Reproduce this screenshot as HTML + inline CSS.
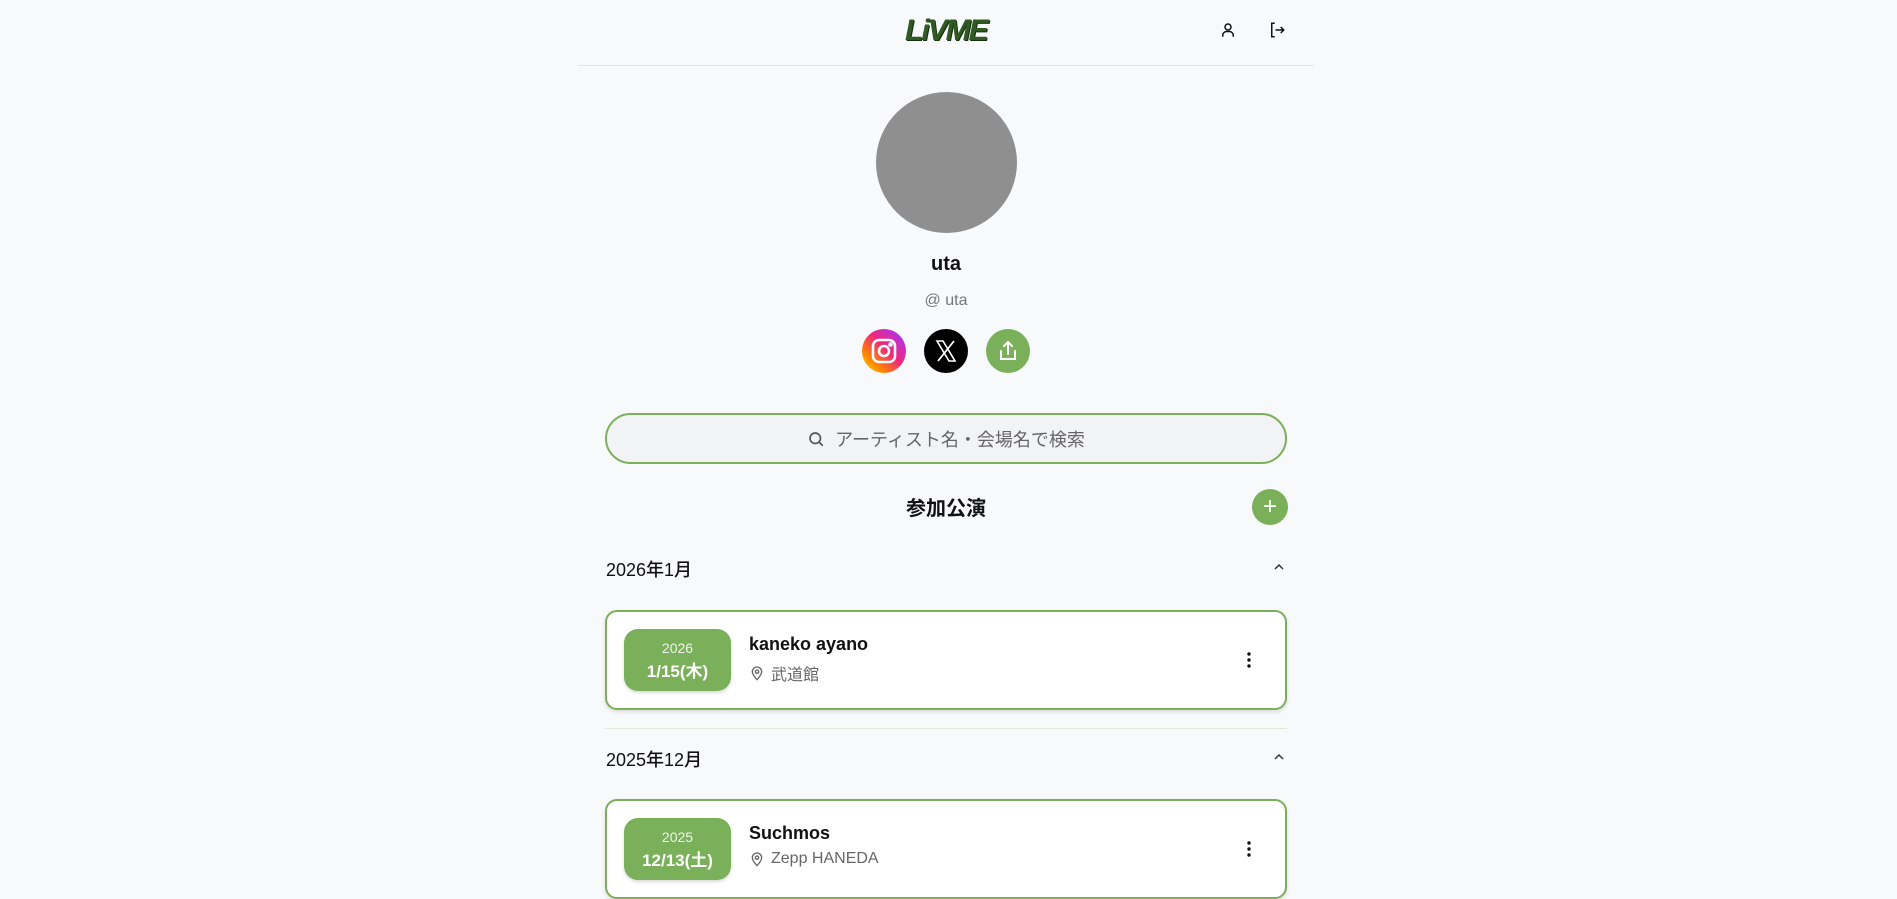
<!DOCTYPE html>
<html><head><meta charset="utf-8"><style>
*{box-sizing:border-box;margin:0;padding:0}
body{width:1897px;height:875px;overflow:hidden;background:#f8f9fb;font-family:"Liberation Sans","Noto Sans CJK JP",sans-serif;color:#111;position:relative}
.a{position:absolute}
.hdr{left:578px;width:736px;top:0;height:66px;border-bottom:1px solid #dfeadb}
.c{text-align:center}
.card{left:605px;width:682px;border:2px solid #7ab05a;border-radius:12px;background:#fff;box-shadow:0 2px 4px rgba(0,0,0,.12)}
.badge{left:17px;top:17px;width:107px;height:62px;background:#7ab05a;border-radius:14px;color:#fff;text-align:center;box-shadow:0 2px 3px rgba(0,0,0,.15)}
.badge .y{font-size:14px;margin-top:11px;color:#eef5ea}
.badge .d{font-size:17px;font-weight:bold;margin-top:1px}
.t{left:142px;top:22px;font-size:18px;font-weight:bold}
.v{left:142px;top:49px;font-size:16px;color:#666;display:flex;align-items:center;gap:6px}
.dots{right:34px;top:40px}
.mh{left:606px;font-size:18px;font-weight:500}
</style></head><body>
<div class="a hdr"></div>
<div class="a" style="left:905px;top:14px;width:86px;height:32px;font:italic 900 30px 'Liberation Sans',sans-serif;color:#2f5a22;letter-spacing:-2px;text-shadow:1px 1px 0 #173010">LiVME</div>
<svg class="a" style="left:1219px;top:21px" width="18" height="18" viewBox="0 0 24 24" fill="none" stroke="#111" stroke-width="2"><circle cx="12" cy="8" r="4"/><path d="M5 21v-2a5 5 0 0 1 5-5h4a5 5 0 0 1 5 5v2"/></svg>
<svg class="a" style="left:1268px;top:21px" width="18" height="18" viewBox="0 0 24 24" fill="none" stroke="#111" stroke-width="2"><path d="M9 3H5v18h4M10 12h11M17 8l4 4-4 4"/></svg>
<div class="a" style="left:876px;top:92px;width:141px;height:141px;border-radius:50%;background:#8f8f8f"></div>
<div class="a c" style="left:846px;width:200px;top:253px;font-size:20px;font-weight:600">uta</div>
<div class="a c" style="left:846px;width:200px;top:292px;font-size:16px;color:#777">@ uta</div>
<div class="a" style="left:862px;top:329px;width:44px;height:44px;border-radius:50%;background:linear-gradient(45deg,#fd0 0%,#f80 25%,#f0277a 55%,#c030d0 80%,#8a3ae0 100%)"></div>
<svg class="a" style="left:870px;top:337px" width="28" height="28" viewBox="0 0 28 28" fill="none" stroke="#fff" stroke-width="2.6"><rect x="3" y="3" width="22" height="22" rx="6"/><circle cx="14" cy="14" r="5"/><circle cx="20.5" cy="7.5" r="1" fill="#fff"/></svg>
<div class="a" style="left:924px;top:329px;width:44px;height:44px;border-radius:50%;background:#000"></div>
<svg class="a" style="left:934px;top:339px" width="24" height="24" viewBox="0 0 24 24"><path d="M3 2h6l12 20h-6z" fill="none" stroke="#fff" stroke-width="1.6"/><path d="M20 2L4 22" stroke="#fff" stroke-width="1.8"/></svg>
<div class="a" style="left:986px;top:329px;width:44px;height:44px;border-radius:50%;background:#7ab05a"></div>
<svg class="a" style="left:996px;top:339px" width="24" height="24" viewBox="0 0 24 24" fill="none" stroke="#fff" stroke-width="2" stroke-linecap="round"><path d="M12 3v12M8 7l4-4 4 4M5 12v8h14v-8"/></svg>
<div class="a" style="left:605px;top:413px;width:682px;height:51px;border:2px solid #7ab05a;border-radius:26px;background:#f1f3f4;display:flex;align-items:center;justify-content:center;gap:10px;font-size:18px;color:#666">
<svg width="18" height="18" viewBox="0 0 24 24" fill="none" stroke="#555" stroke-width="2.2"><circle cx="11" cy="11" r="7"/><path d="M16 16l5 5"/></svg>アーティスト名・会場名で検索</div>
<div class="a c" style="left:846px;width:200px;top:492px;font-size:20px;font-weight:bold">参加公演</div>
<div class="a" style="left:1252px;top:489px;width:36px;height:36px;border-radius:50%;background:#7ab05a;color:#fff;font-size:24px;line-height:35px;text-align:center">+</div>
<div class="a mh" style="top:556px">2026年1月</div>
<svg class="a" style="left:1272px;top:562px" width="14" height="10" viewBox="0 0 14 10" fill="none" stroke="#333" stroke-width="1.5"><path d="M3 7l4-4 4 4"/></svg>
<div class="a card" style="top:610px;height:100px">
<div class="a badge"><div class="y">2026</div><div class="d">1/15(木)</div></div>
<div class="a t">kaneko ayano</div>
<div class="a v"><svg width="16" height="16" viewBox="0 0 24 24" fill="none" stroke="#666" stroke-width="2"><path d="M12 22s7-7 7-12a7 7 0 0 0-14 0c0 5 7 12 7 12z"/><circle cx="12" cy="10" r="2.5"/></svg>武道館</div>
<svg class="a dots" width="4" height="16" viewBox="0 0 4 16" fill="#111"><circle cx="2" cy="2" r="1.7"/><circle cx="2" cy="8" r="1.7"/><circle cx="2" cy="14" r="1.7"/></svg>
</div>
<div class="a" style="left:605px;top:728px;width:682px;height:1px;background:#dfeadb"></div>
<div class="a mh" style="top:746px">2025年12月</div>
<svg class="a" style="left:1272px;top:752px" width="14" height="10" viewBox="0 0 14 10" fill="none" stroke="#333" stroke-width="1.5"><path d="M3 7l4-4 4 4"/></svg>
<div class="a card" style="top:799px;height:100px">
<div class="a badge"><div class="y">2025</div><div class="d">12/13(土)</div></div>
<div class="a t">Suchmos</div>
<div class="a v"><svg width="16" height="16" viewBox="0 0 24 24" fill="none" stroke="#666" stroke-width="2"><path d="M12 22s7-7 7-12a7 7 0 0 0-14 0c0 5 7 12 7 12z"/><circle cx="12" cy="10" r="2.5"/></svg>Zepp HANEDA</div>
<svg class="a dots" width="4" height="16" viewBox="0 0 4 16" fill="#111"><circle cx="2" cy="2" r="1.7"/><circle cx="2" cy="8" r="1.7"/><circle cx="2" cy="14" r="1.7"/></svg>
</div>
</body></html>
